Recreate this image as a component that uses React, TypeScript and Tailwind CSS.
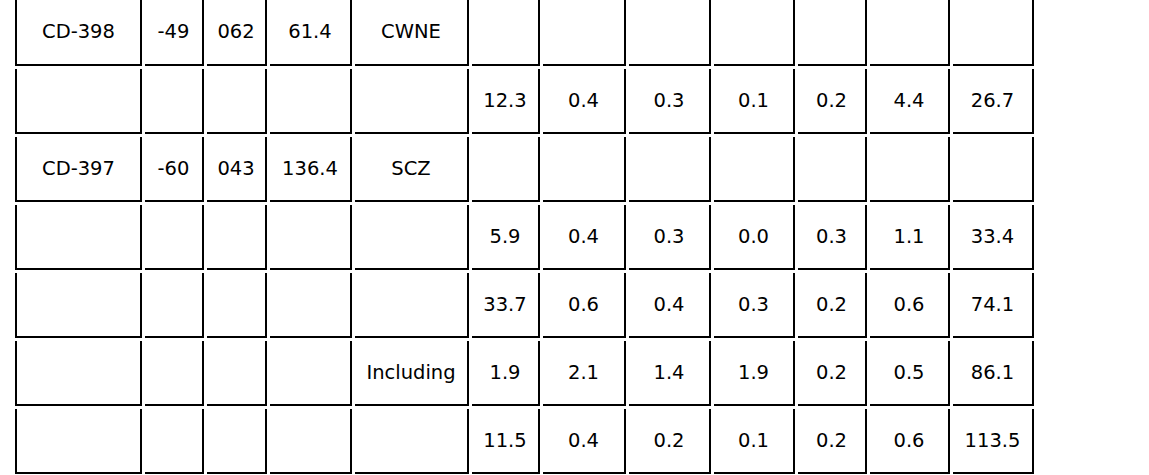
const widths = [
  "w-[127px]",
  "w-[59px]",
  "w-[60px]",
  "w-[82px]",
  "w-[114px]",
  "w-[68px]",
  "w-[83px]",
  "w-[82px]",
  "w-[81px]",
  "w-[69px]",
  "w-[80px]",
  "w-[81px]",
];

const rows: string[][] = [
  ["CD-398", "-49", "062", "61.4", "CWNE", "", "", "", "", "", "", ""],
  ["", "", "", "", "", "12.3", "0.4", "0.3", "0.1", "0.2", "4.4", "26.7"],
  ["CD-397", "-60", "043", "136.4", "SCZ", "", "", "", "", "", "", ""],
  ["", "", "", "", "", "5.9", "0.4", "0.3", "0.0", "0.3", "1.1", "33.4"],
  ["", "", "", "", "", "33.7", "0.6", "0.4", "0.3", "0.2", "0.6", "74.1"],
  ["", "", "", "", "Including", "1.9", "2.1", "1.4", "1.9", "0.2", "0.5", "86.1"],
  ["", "", "", "", "", "11.5", "0.4", "0.2", "0.1", "0.2", "0.6", "113.5"],
];

const App = () => {
  return (
    <div className="h-[475px] w-[1149px] overflow-hidden bg-white font-['DejaVu_Sans',Verdana,sans-serif] text-[19.5px] text-black">
      <table className="-mt-[4px] ml-[12px] w-[1025px] table-fixed border-separate border-spacing-[3px]">
        <colgroup>
          {widths.map((w, i) => (
            <col key={i} className={w} />
          ))}
        </colgroup>
        <tbody>
          {rows.map((row, r) => (
            <tr key={r}>
              {row.map((cell, c) => (
                <td
                  key={c}
                  className={`${r === 0 ? "h-[67px]" : "h-[65px]"} border-r-2 border-b-2 border-black p-0 text-center align-middle ${c === 0 ? "border-l-2" : ""}`}
                >
                  {cell}
                </td>
              ))}
            </tr>
          ))}
        </tbody>
      </table>
    </div>
  );
};

export default App;
